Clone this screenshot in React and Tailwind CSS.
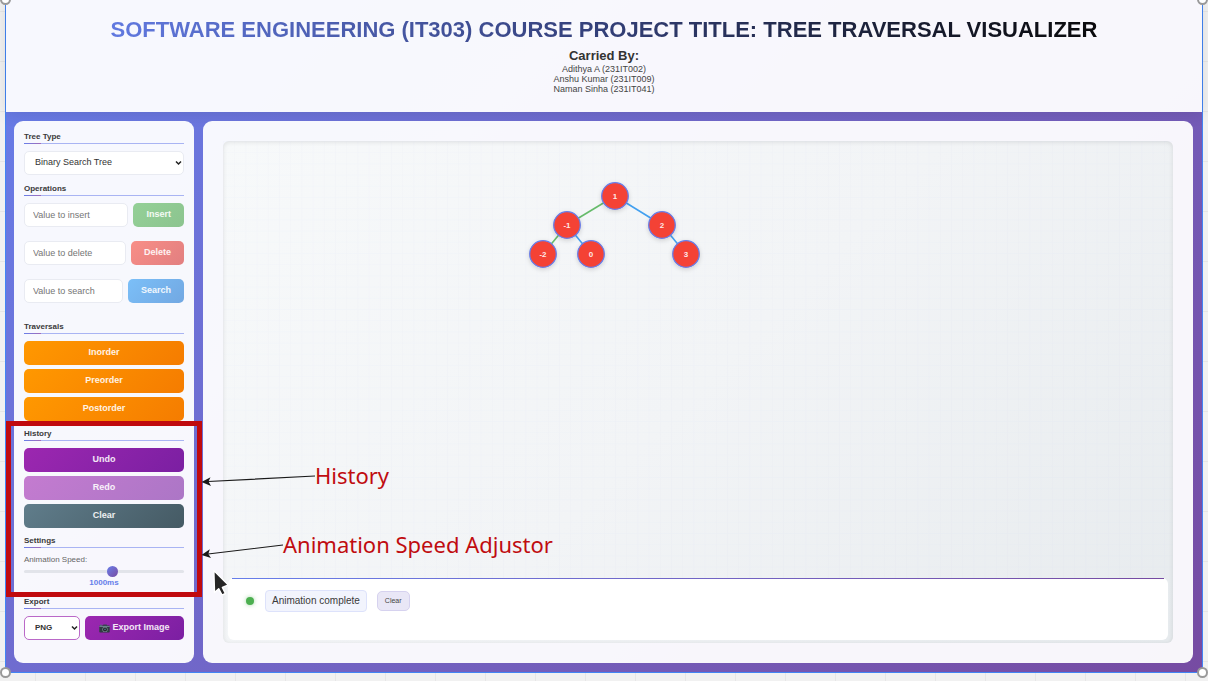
import React, { useState } from "react";

const nodes = [
  { label: "1", x: 392, y: 55 },
  { label: "-1", x: 344, y: 84 },
  { label: "2", x: 439, y: 84 },
  { label: "-2", x: 320, y: 113 },
  { label: "0", x: 368, y: 113 },
  { label: "3", x: 463, y: 113 },
];

const edges = [
  { from: 0, to: 1, color: "#66bb6a" },
  { from: 0, to: 2, color: "#42a0f0" },
  { from: 1, to: 3, color: "#66bb6a" },
  { from: 1, to: 4, color: "#42a0f0" },
  { from: 2, to: 5, color: "#42a0f0" },
];

function Section({ title, className = "", children }) {
  return (
    <section className={className}>
      <h3 className="relative mb-[7px] border-b border-[#a9b4f3] pb-px text-[8px] leading-[10px] font-bold text-[#3a3a3a]">
        {title}
        <span className="absolute -bottom-px left-0 h-px w-[17px] bg-linear-to-r from-[#667eea] to-[#a06bb8]" />
      </h3>
      {children}
    </section>
  );
}

function OperationRow({ name, color }) {
  return (
    <div className="flex gap-[5px]">
      <input
        type="text"
        aria-label={"Value to " + name.toLowerCase()}
        placeholder={"Value to " + name.toLowerCase()}
        className="h-6 min-w-0 flex-1 rounded-[5px] border border-[#e9ebf2] bg-white px-2 text-[9px] text-[#333] placeholder:text-[#757575]"
      />
      <button className={"h-6 rounded-[5px] bg-linear-135 px-[13px] text-[9px] font-bold text-white/90 " + color}>
        {name}
      </button>
    </div>
  );
}

function WideButton({ color, children }) {
  return (
    <button className={"h-6 w-full rounded-[5px] bg-linear-135 text-[9px] font-bold text-white/90 " + color}>
      {children}
    </button>
  );
}

function Chevron({ className }) {
  return (
    <svg className={"pointer-events-none absolute " + className} width="7" height="6" viewBox="0 0 7 6" fill="none">
      <path d="M1 1.5 3.5 4 6 1.5" stroke="#222" strokeWidth="1.5" />
    </svg>
  );
}

function CameraIcon() {
  return (
    <svg width="11" height="9" viewBox="0 0 11 9">
      <rect x="0.3" y="1.6" width="10.4" height="7" rx="0.8" fill="#2f3b41" />
      <rect x="1" y="0.7" width="2" height="1.2" fill="#546e7a" />
      <rect x="4" y="0.4" width="4" height="2" rx="0.5" fill="#37474f" />
      <rect x="0.3" y="2.2" width="10.4" height="0.8" fill="#78909c" />
      <circle cx="6" cy="5.4" r="2.6" fill="#78909c" />
      <circle cx="6" cy="5.4" r="2" fill="#212121" />
      <circle cx="6" cy="5.4" r="0.8" fill="#4c7f96" />
    </svg>
  );
}

function Sidebar() {
  const [speed, setSpeed] = useState(1110);
  return (
    <aside className="w-[180px] shrink-0 rounded-[9px] bg-white/95 px-[10px] pt-[11px] pb-2">
      <Section title="Tree Type">
        <div className="relative">
          <select
            aria-label="Tree Type"
            className="block h-6 w-full appearance-none rounded-[5px] border border-[#e9ebf2] bg-white px-[10px] text-[9px] text-[#333]"
          >
            <option>Binary Search Tree</option>
          </select>
          <Chevron className="top-[9px] right-[2px]" />
        </div>
      </Section>

      <Section title="Operations" className="mt-[9px]">
        <div className="flex flex-col gap-[14px]">
          <OperationRow name="Insert" color="from-[#94d097] to-[#8cc48f]" />
          <OperationRow name="Delete" color="from-[#f88e87] to-[#e27f80]" />
          <OperationRow name="Search" color="from-[#7bbff8] to-[#72a8e2]" />
        </div>
      </Section>

      <Section title="Traversals" className="mt-[19px]">
        <div className="flex flex-col gap-1">
          <WideButton color="from-[#ff9800] to-[#f57c00]">Inorder</WideButton>
          <WideButton color="from-[#ff9800] to-[#f57c00]">Preorder</WideButton>
          <WideButton color="from-[#ff9800] to-[#f57c00]">Postorder</WideButton>
        </div>
      </Section>

      <Section title="History" className="mt-2">
        <div className="flex flex-col gap-1">
          <WideButton color="from-[#9c27b0] to-[#7b1fa2]">Undo</WideButton>
          <WideButton color="from-[#c47bd0] to-[#ac76c6]">Redo</WideButton>
          <WideButton color="from-[#607d8b] to-[#455a64]">Clear</WideButton>
        </div>
      </Section>

      <Section title="Settings" className="mt-2">
        <label htmlFor="speed" className="block text-[8px] leading-[10px] text-[#666]">
          Animation Speed:
        </label>
        <input
          id="speed"
          type="range"
          min="0"
          max="2000"
          value={speed}
          onChange={(e) => setSpeed(Number(e.target.value))}
          className="block h-3 w-full appearance-none bg-transparent [&::-webkit-slider-runnable-track]:h-[3px] [&::-webkit-slider-runnable-track]:rounded-full [&::-webkit-slider-runnable-track]:bg-[#e2e4ea] [&::-webkit-slider-thumb]:-mt-1 [&::-webkit-slider-thumb]:size-[11px] [&::-webkit-slider-thumb]:appearance-none [&::-webkit-slider-thumb]:rounded-full [&::-webkit-slider-thumb]:bg-linear-135 [&::-webkit-slider-thumb]:from-[#667eea] [&::-webkit-slider-thumb]:to-[#764ba2]"
        />
        <output htmlFor="speed" className="block text-center text-[8px] leading-[12px] font-bold text-[#667eea]">
          1000ms
        </output>
      </Section>

      <Section title="Export" className="mt-2">
        <div className="flex gap-[5px]">
          <div className="relative w-14">
            <select
              aria-label="Export format"
              className="block h-6 w-full appearance-none rounded-[5px] border border-[#ba68c8] bg-white px-[10px] text-[8px] font-bold text-[#333]"
            >
              <option>PNG</option>
            </select>
            <Chevron className="top-[9px] right-[2px]" />
          </div>
          <button className="flex h-6 flex-1 items-center justify-center gap-[2px] rounded-[5px] bg-linear-135 from-[#9c27b0] to-[#7b1fa2] text-[9px] font-bold whitespace-nowrap text-white/90">
            <CameraIcon />
            Export Image
          </button>
        </div>
      </Section>
    </aside>
  );
}

function TreeCanvas() {
  return (
    <svg className="w-full flex-1" role="img" aria-label="Binary search tree">
      <defs>
        <pattern id="grid" width="11.2" height="11.2" patternUnits="userSpaceOnUse">
          <path d="M11.2 0H0V11.2" fill="none" stroke="#667eea" strokeOpacity="0.04" />
        </pattern>
        <filter id="shadow" x="-50%" y="-50%" width="200%" height="200%">
          <feDropShadow dx="0" dy="1.5" stdDeviation="2" floodOpacity="0.16" />
        </filter>
      </defs>
      <rect width="100%" height="100%" fill="url(#grid)" />
      {edges.map((e) => (
        <line
          key={e.from + "-" + e.to}
          x1={nodes[e.from].x}
          y1={nodes[e.from].y}
          x2={nodes[e.to].x}
          y2={nodes[e.to].y}
          stroke={e.color}
          strokeWidth="1.6"
        />
      ))}
      {nodes.map((n) => (
        <g key={n.label}>
          <circle cx={n.x} cy={n.y} r="13.3" fill="#f44336" stroke="#667eea" strokeWidth="1.3" filter="url(#shadow)" />
          <text x={n.x} y={n.y + 3} textAnchor="middle" fill="#fff" fillOpacity="0.9" className="text-[8px] font-bold">
            {n.label}
          </text>
        </g>
      ))}
    </svg>
  );
}

function StatusPanel() {
  return (
    <div className="relative mx-[5px] mb-[3px] flex h-[62px] items-start gap-[10px] rounded-[6px] bg-white px-[18px] pt-3">
      <span className="absolute top-0 right-1 left-1 h-px bg-linear-to-r from-[#667eea] to-[#764ba2]" />
      <span className="mt-[7px] mr-px size-2 rounded-full bg-[#4caf50] shadow-[0_0_4px_#4caf5080]" />
      <p className="rounded-[4px] border border-[#dde2fb] bg-[#f2f4fd] px-[6px] text-[10px] leading-5 text-[#3a3a3a]">
        Animation complete
      </p>
      <button className="mt-px h-5 rounded-[5px] border border-[#d6d2ef] bg-[#e9e7f6] px-[7px] text-[7px] text-[#444]">
        Clear
      </button>
    </div>
  );
}

function Annotations() {
  return (
    <div className="pointer-events-none absolute inset-0 text-[22px] leading-[30px] text-[#c00c10] [font-family:'Noto_Sans',sans-serif]">
      <div className="absolute top-[421px] left-[6px] h-[176px] w-[196px] border-[5px] border-[#c00a0e]" />
      <svg className="absolute top-[465px] left-[200px]" width="120" height="100" viewBox="0 0 120 100">
        <path d="M8 16.5 115 11M8 89 83 80" stroke="#1a1a1a" strokeWidth="1.2" fill="none" />
        <path d="M1.5 17 10.5 12.2 8.5 16.6 11 21ZM1.5 90 9.8 84.2 8.3 89.1 11 93Z" fill="#1a1a1a" />
      </svg>
      <p className="absolute top-[460px] left-[315px]">History</p>
      <p className="absolute top-[529px] left-[283px] whitespace-nowrap">Animation Speed Adjustor</p>
      <svg className="absolute top-[568px] left-[210px]" width="22" height="30" viewBox="0 0 22 30">
        <path
          d="M3.8 2.5 4.5 24.5 8.7 20.8 12 27.2 15.4 25.5 12.4 19.4 18.4 17Z"
          fill="#262626"
          stroke="#fff"
          strokeWidth="1.5"
          strokeLinejoin="round"
        />
      </svg>
    </div>
  );
}

export default function App() {
  return (
    <div className="relative flex min-h-screen flex-col bg-[#f1f1f1] bg-[linear-gradient(to_right,#e6e6e6_1px,transparent_1px),linear-gradient(to_bottom,#e6e6e6_1px,transparent_1px)] bg-[size:50px_50px] bg-[position:35px_11px] px-[5px] pb-2 [font-family:'Liberation_Sans',Arial,sans-serif]">
      <div className="relative flex flex-1 flex-col border-x border-b border-[#4285f4] bg-linear-135 from-[#667eea] to-[#764ba2]">
        <header className="flex h-28 flex-col items-center bg-white/95 pt-4 text-center shadow-[0_2px_14px_rgba(0,0,0,0.10)]">
          <h1 className="bg-linear-to-r from-[#6179e0] via-[#333f78] to-[#0a0a0c] bg-clip-text text-[22px] leading-7 font-bold whitespace-nowrap text-transparent">
            SOFTWARE ENGINEERING (IT303) COURSE PROJECT TITLE: TREE TRAVERSAL VISUALIZER
          </h1>
          <h2 className="mt-1 mb-px text-[13px] leading-[15px] font-bold text-[#333]">Carried By:</h2>
          <p className="text-[9px] leading-[10px] text-[#444]">
            Adithya A (231IT002)
            <br />
            Anshu Kumar (231IT009)
            <br />
            Naman Sinha (231IT041)
          </p>
        </header>
        <div className="flex flex-1 gap-[9px] p-[9px] pl-2">
          <Sidebar />
          <main className="flex min-w-0 flex-1 flex-col rounded-[9px] bg-white/95 px-5 py-5">
            <div className="relative flex flex-1 flex-col rounded-[6px] bg-linear-135 from-[#f7f9fa] via-[#f2f4f6] to-[#e7ebee] shadow-[inset_0_1px_5px_rgba(0,0,0,0.10)]">
              <TreeCanvas />
              <StatusPanel />
            </div>
          </main>
        </div>
        <span className="absolute -bottom-[6px] -left-[6px] size-[11px] rounded-full border-2 border-[#999] bg-white" />
        <span className="absolute -right-[6px] -bottom-[6px] size-[11px] rounded-full border-2 border-[#999] bg-white" />
        <span className="absolute -top-[6px] -left-[6px] size-[11px] rounded-full border-2 border-[#999] bg-white" />
        <span className="absolute -top-[6px] -right-[6px] size-[11px] rounded-full border-2 border-[#999] bg-white" />
      </div>
      <Annotations />
    </div>
  );
}
